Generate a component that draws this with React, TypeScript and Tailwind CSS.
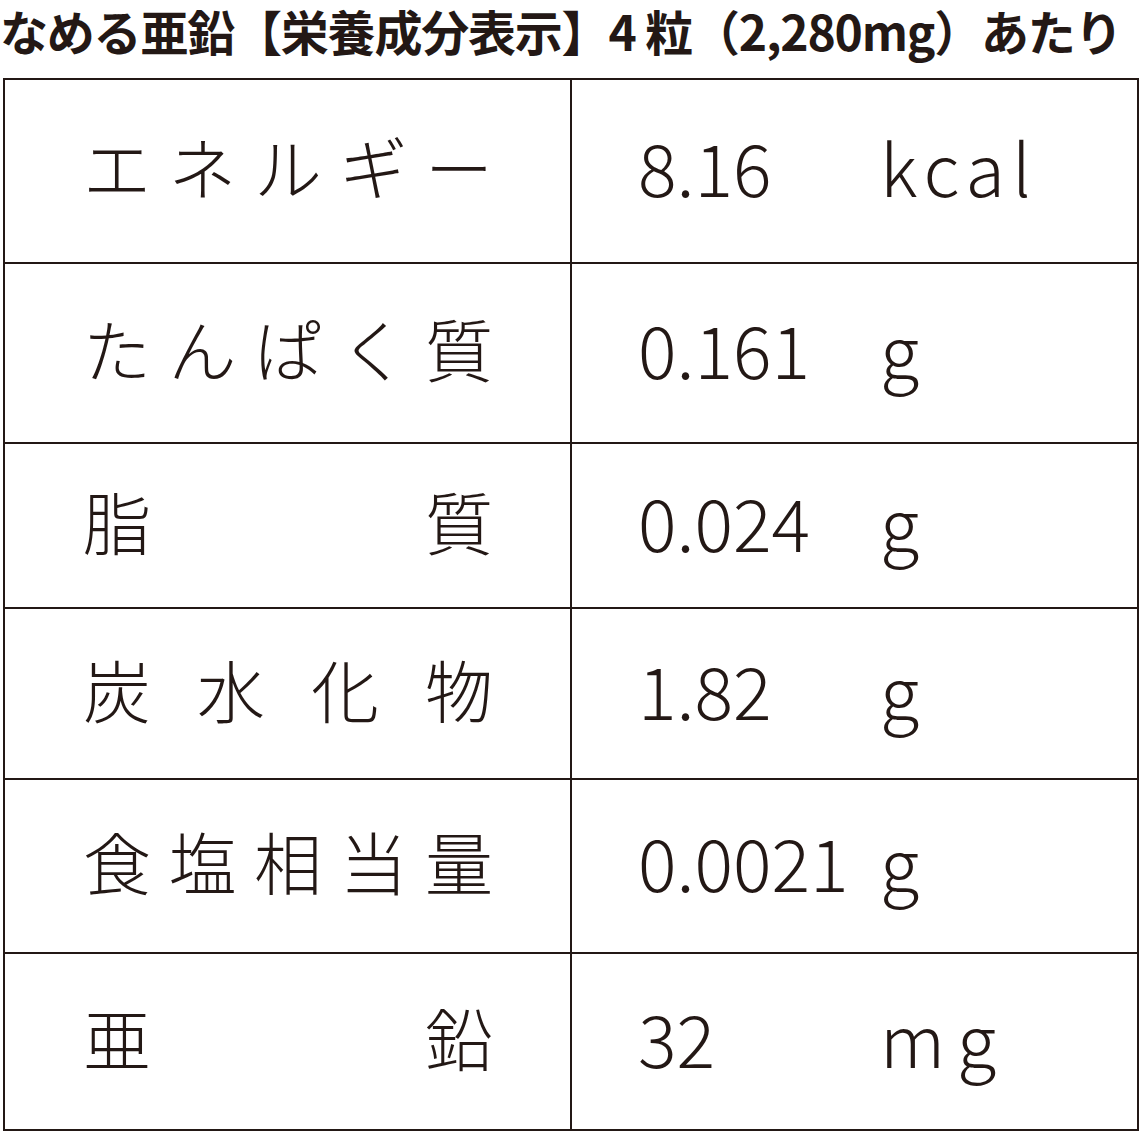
const rows = [
  { label: 'エネルギー', value: '8.16', unit: 'kcal', h: 'h-[182px]' },
  { label: 'たんぱく質', value: '0.161', unit: 'g', h: 'h-[180px]' },
  { label: '脂質', value: '0.024', unit: 'g', h: 'h-[165px]' },
  { label: '炭水化物', value: '1.82', unit: 'g', h: 'h-[171px]' },
  { label: '食塩相当量', value: '0.0021', unit: 'g', h: 'h-[174px]' },
  { label: '亜鉛', value: '32', unit: 'mg', h: 'h-[177px]' },
];

function Unit({ unit }: { unit: string }) {
  if (unit === 'kcal') return <span className="tracking-[7px]">kcal</span>;
  if (unit === 'mg') return <span className="tracking-[12px]">mg</span>;
  return <span>g</span>;
}

export default function App() {
  return (
    <div
      className="w-[1143px] h-[1132px] bg-white text-[#231815]"
      style={{ fontFamily: '"Noto Sans CJK JP", "Noto Sans", sans-serif' }}
    >
      {/* heading */}
      <div className="pb-[18px] text-[48px] font-bold leading-[60px] tracking-[-1.2px] whitespace-nowrap">
        なめる亜鉛【栄養成分表示】4 粒（2,280mg）あたり
      </div>

      {/* table */}
      <div className="ml-[3px] w-[1136px] border-2 border-[#231815]">
        {rows.map((r, i) => (
          <div
            key={r.label}
            className={`flex ${r.h} ${i > 0 ? 'border-t-2 border-[#231815]' : ''}`}
          >
            <div className="w-[567px] shrink-0 border-r-2 border-[#231815] flex items-center pl-[78px] pb-[10px]">
              <div className="w-[410px] flex justify-between text-[68px] font-light leading-none">
                {r.label.split('').map((c, j) => (
                  <span key={j}>{c}</span>
                ))}
              </div>
            </div>
            <div className="flex-1 flex items-center pl-[66px] pb-[10px] text-[72px] font-light leading-none">
              <span className="w-[242px] shrink-0">{r.value}</span>
              <Unit unit={r.unit} />
            </div>
          </div>
        ))}
      </div>
    </div>
  );
}
